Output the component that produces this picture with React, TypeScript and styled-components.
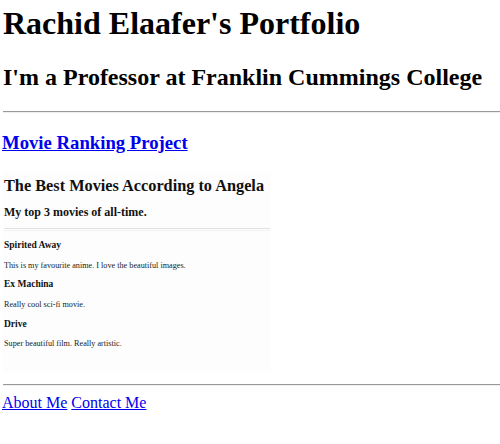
import React from "react";
import styled, { createGlobalStyle } from "styled-components";

const Global = createGlobalStyle`
  html, body { margin: 0; padding: 0; background: #fff; }
  body { font-family: "Liberation Serif", "Times New Roman", serif; color: #000; overflow: hidden; }
`;

const Page = styled.div`
  padding-left: 3px;
  width: 520px;
`;

const Title = styled.h1`
  font-size: 32px;
  font-weight: bold;
  margin: 5.44px 0 21.44px;
`;

const Subtitle = styled.h2`
  font-size: 24px;
  font-weight: bold;
  margin: 19.92px 0;
`;

const Rule = styled.hr`
  margin: 8px 0;
  border: none;
  border-top: 1px solid #9a9a9a;
  border-bottom: 1px solid #eeeeee;
  height: 0;
`;

const ProjectHeading = styled.h3`
  font-size: 18.72px;
  font-weight: bold;
  margin: 18.72px 0;
  margin-left: -1px;
`;

const Link = styled.a`
  color: #0000ee;
  text-decoration: underline;
`;

const Shot = styled.div`
  display: inline-block;
  overflow: hidden;
  vertical-align: baseline;
  width: 268px;
  height: 200px;
  background: #fdfdfd;
  padding: 4px 0 0 1px;
  box-sizing: border-box;
  color: #111;
  white-space: nowrap;
`;

const ShotTitle = styled.div`
  font-size: 16.3px;
  line-height: 20px;
  font-weight: bold;
`;

const ShotSub = styled.div`
  font-size: 12px;
  line-height: 14px;
  font-weight: bold;
  margin-top: 9px;
`;

const ShotRule = styled.div`
  margin-top: 9px;
  height: 1px;
  border-top: 1px solid #e2e2e2;
  border-bottom: 1px solid #f2f2f2;
  width: 266px;
`;

const MovieName = styled.div<{ $gap: number }>`
  font-size: 9.5px;
  line-height: 12px;
  font-weight: bold;
  margin-top: ${(p) => p.$gap}px;
`;

const MovieDesc = styled.div<{ $gap: number }>`
  font-size: 8.2px;
  line-height: 10px;
  margin-top: ${(p) => p.$gap}px;
  color: #222;
`;

const Footer = styled.div`
  font-size: 16px;
  margin-left: -1px;
`;

const movies = [
  { name: "Spirited Away", desc: "This is my favourite anime. I love the beautiful images.", g1: 8, g2: 10 },
  { name: "Ex Machina", desc: "Really cool sci-fi movie.", g1: 7, g2: 10 },
  { name: "Drive", desc: "Super beautiful film. Really artistic.", g1: 8, g2: 9 },
];

export default function App() {
  return (
    <Page>
      <Global />
      <Title>Rachid Elaafer's Portfolio</Title>
      <Subtitle>I'm a Professor at Franklin Cummings College</Subtitle>
      <Rule />
      <ProjectHeading>
        <Link href="#">Movie Ranking Project</Link>
      </ProjectHeading>
      <Shot>
        <ShotTitle>The Best Movies According to Angela</ShotTitle>
        <ShotSub>My top 3 movies of all-time.</ShotSub>
        <ShotRule />
        {movies.map((m) => (
          <React.Fragment key={m.name}>
            <MovieName $gap={m.g1}>{m.name}</MovieName>
            <MovieDesc $gap={m.g2}>{m.desc}</MovieDesc>
          </React.Fragment>
        ))}
      </Shot>
      <Rule />
      <Footer>
        <Link href="#">About Me</Link> <Link href="#">Contact Me</Link>
      </Footer>
    </Page>
  );
}
